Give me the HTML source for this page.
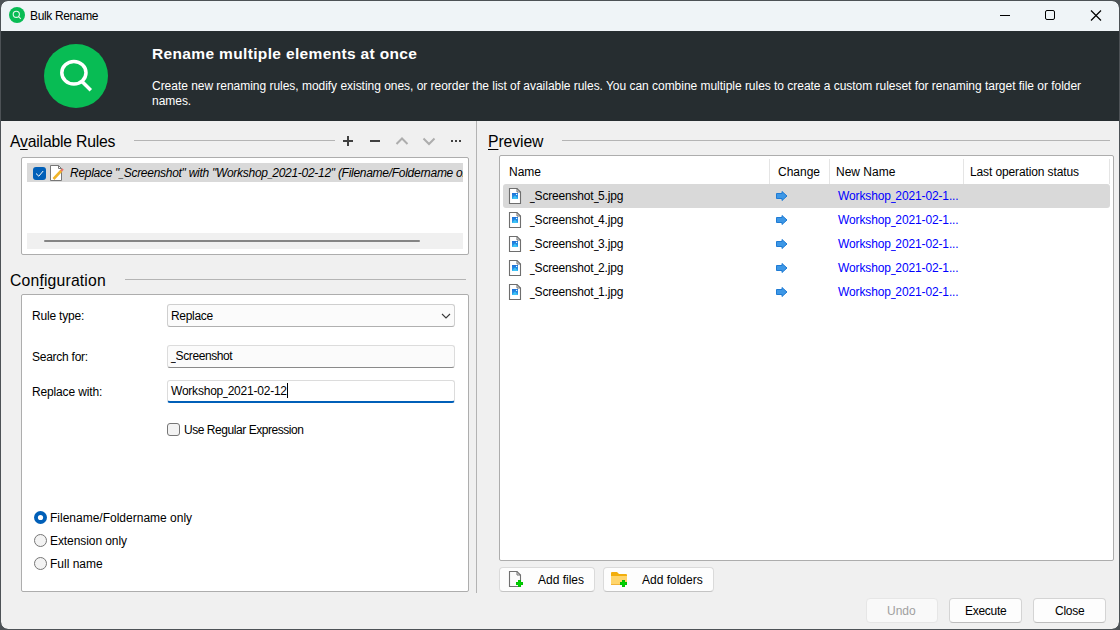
<!DOCTYPE html>
<html><head><meta charset="utf-8">
<style>
html,body{margin:0;padding:0;width:1120px;height:630px;overflow:hidden;background:#4d5256;}
*{box-sizing:border-box;}
body{font-family:"Liberation Sans",sans-serif;color:#000;position:relative;}
.a{position:absolute;}
.t{position:absolute;white-space:nowrap;font-size:12px;line-height:14px;}
.u{display:inline-block;width:4.6px;transform:scaleX(0.7);transform-origin:0 0;}
.s15{font-size:15.75px;line-height:18px;}
svg{position:absolute;overflow:visible;}
#win{position:absolute;left:1px;top:1px;width:1118px;height:628px;background:#f0f0f0;border-radius:7px;overflow:hidden;}
</style></head><body>
<div id="win"></div>
<!-- title bar -->
<div class="a" style="left:1px;top:1px;width:1118px;height:30px;background:#eff4f7;border-radius:7px 7px 0 0"></div>

<svg style="left:0;top:0" width="1120" height="31">
  <circle cx="17" cy="15" r="8" fill="#08bc54"/>
  <circle cx="16.3" cy="14.3" r="3.1" fill="none" stroke="#e6f7ec" stroke-width="1.1"/>
  <line x1="18.6" y1="16.6" x2="20.8" y2="18.8" stroke="#e6f7ec" stroke-width="1.1"/>
  <line x1="1000" y1="15.5" x2="1010" y2="15.5" stroke="#000" stroke-width="1"/>
  <rect x="1045.5" y="10.5" width="9" height="9" rx="1.5" fill="none" stroke="#000" stroke-width="1"/>
  <path d="M1091 10.5 L1101 20.5 M1101 10.5 L1091 20.5" stroke="#000" stroke-width="1.2"/>
</svg>
<div class="t" style="left:30px;top:9px;font-size:12px;letter-spacing:-0.36px;">Bulk Rename</div>

<!-- header -->
<div class="a" style="left:1px;top:31px;width:1118px;height:90px;background:#262d30;"></div>
<svg style="left:0;top:0" width="120" height="121">
  <circle cx="76" cy="76" r="32" fill="#08bc54"/>
  <ellipse cx="73.9" cy="72.7" rx="12.1" ry="11.3" fill="none" stroke="#fff" stroke-width="3.5"/>
  <line x1="82" y1="81.5" x2="90.8" y2="90.3" stroke="#fff" stroke-width="3.5"/>
</svg>
<div class="t" style="left:152px;top:44px;font-size:15.5px;line-height:19px;font-weight:bold;color:#fff;letter-spacing:0.35px;">Rename multiple elements at once</div>
<div class="t" style="left:152px;top:79px;color:#fff;line-height:15px;letter-spacing:-0.03px;">Create new renaming rules, modify existing ones, or reorder the list of available rules. You can combine multiple rules to create a custom ruleset for renaming target file or folder<br>names.</div>

<!-- LEFT PANE -->

<div class="t s15" style="left:10px;top:133px;letter-spacing:-0.2px;">A<span style="text-decoration:underline;text-underline-offset:2px;">v</span>ailable Rules</div>
<div class="a" style="left:134px;top:140px;width:201px;height:1px;background:#b4b4b4;"></div>
<svg style="left:0;top:0" width="480" height="160">
  <path d="M343 141 H353 M348 136 V146" stroke="#404040" stroke-width="2"/>
  <path d="M370 141 H380" stroke="#404040" stroke-width="2"/>
  <path d="M396.5 144 L402 138.5 L407.5 144" fill="none" stroke="#adadad" stroke-width="2"/>
  <path d="M423.5 138.5 L429 144 L434.5 138.5" fill="none" stroke="#adadad" stroke-width="2"/>
  <rect x="451" y="140" width="2" height="2" fill="#404040"/>
  <rect x="455" y="140" width="2" height="2" fill="#404040"/>
  <rect x="459" y="140" width="2" height="2" fill="#404040"/>
</svg>
<div class="a" style="left:21px;top:157px;width:448px;height:98px;background:#fff;border:1px solid #adadad;border-radius:2px;"></div>
<div class="a" style="left:27px;top:163px;width:436px;height:19px;background:#d9d9d9;"></div>
<div class="a" style="left:27px;top:233px;width:436px;height:16px;background:#f0f0f0;"></div>
<div class="a" style="left:44px;top:240px;width:376px;height:2px;background:#858585;border-radius:1px;"></div>
<svg style="left:0;top:0" width="80" height="190">
  <rect x="33" y="167" width="13" height="13" rx="3" fill="#005fb8"/>
  <path d="M36 173.5 L38.8 176.2 L43.2 171" fill="none" stroke="#fff" stroke-width="1"/>
  <path d="M50.5 165.5 H58.5 L61.5 168.5 V180.5 H50.5 Z" fill="#fff" stroke="#777" stroke-width="1"/>
  <path d="M58.5 165.5 V168.5 H61.5" fill="none" stroke="#777" stroke-width="1"/>
  <path d="M53.5 179 L61.5 170.5" stroke="#f0b429" stroke-width="2.6"/>
  <path d="M61 171 L63 169" stroke="#e8736b" stroke-width="2"/>
</svg>
<div class="a" style="left:27px;top:163px;width:436px;height:19px;overflow:hidden;">
<div class="t" style="left:43px;top:3px;font-style:italic;letter-spacing:-0.28px;">Replace "<span class="u">_</span>Screenshot" with "Workshop<span class="u">_</span>2021-02-12" (Filename/Foldername only)</div>
</div>

<div class="t s15" style="left:10px;top:272px;letter-spacing:0.17px;">Con<span style="text-decoration:underline;text-underline-offset:2px;">f</span>iguration</div>
<div class="a" style="left:125px;top:279px;width:341px;height:1px;background:#b4b4b4;"></div>
<div class="a" style="left:21px;top:294px;width:448px;height:298px;background:#fff;border:1px solid #adadad;border-radius:2px;"></div>
<div class="t" style="left:32px;top:309px;letter-spacing:-0.2px;">Rule type:</div>
<div class="a" style="left:167px;top:304px;width:288px;height:23px;background:#fbfbfb;border:1px solid #cfcfcf;border-bottom-color:#b0b0b0;border-radius:3px;"></div>
<div class="t" style="left:171px;top:309px;letter-spacing:-0.3px;">Replace</div>
<svg style="left:0;top:0" width="460" height="330"><path d="M442 314 L446 318 L450 314" fill="none" stroke="#3a3a3a" stroke-width="1.1"/></svg>
<div class="t" style="left:32px;top:350px;letter-spacing:-0.25px;">Search for:</div>
<div class="a" style="left:167px;top:345px;width:288px;height:23px;background:#fbfbfb;border:1px solid #dcdcdc;border-bottom-color:#8a8a8a;border-radius:3px;"></div>
<div class="t" style="left:171px;top:349px;letter-spacing:-0.4px;"><span class="u">_</span>Screenshot</div>
<div class="t" style="left:32px;top:385px;letter-spacing:-0.15px;">Replace with:</div>
<div class="a" style="left:167px;top:380px;width:288px;height:23px;background:#fff;border:1px solid #dcdcdc;border-bottom:2px solid #005fb8;border-radius:3px;"></div>
<div class="t" style="left:171px;top:384px;letter-spacing:-0.22px;">Workshop<span class="u">_</span>2021-02-12</div>
<div class="a" style="left:287px;top:383px;width:1px;height:15px;background:#000;"></div>
<svg style="left:0;top:0" width="480" height="600">
  <rect x="167.5" y="423.5" width="12" height="12" rx="2.5" fill="#f3f3f3" stroke="#767676" stroke-width="1"/>
  <circle cx="40.5" cy="517.5" r="6.5" fill="#005fb8"/>
  <circle cx="40.5" cy="517.5" r="2.6" fill="#fff"/>
  <circle cx="40.5" cy="540.5" r="6" fill="#f3f3f3" stroke="#767676" stroke-width="1"/>
  <circle cx="40.5" cy="563.5" r="6" fill="#f3f3f3" stroke="#767676" stroke-width="1"/>
</svg>
<div class="t" style="left:184px;top:423px;letter-spacing:-0.45px;">Use Regular Expression</div>
<div class="t" style="left:50px;top:511px;">Filename/Foldername only</div>
<div class="t" style="left:50px;top:534px;letter-spacing:-0.08px;">Extension only</div>
<div class="t" style="left:50px;top:557px;">Full name</div>
<div class="a" style="left:476px;top:121px;width:1px;height:472px;background:#b3b3b3;"></div>


<!-- RIGHT PANE -->

<div class="t s15" style="left:488px;top:133px;letter-spacing:-0.09px;"><span style="text-decoration:underline;text-underline-offset:2px;">P</span>review</div>
<div class="a" style="left:562px;top:140px;width:548px;height:1px;background:#b4b4b4;"></div>
<div class="a" style="left:499px;top:155px;width:615px;height:406px;background:#fff;border:1px solid #adadad;border-radius:2px;"></div>
<div class="a" style="left:769px;top:159px;width:1px;height:25px;background:#e5e5e5;"></div>
<div class="a" style="left:829px;top:159px;width:1px;height:25px;background:#e5e5e5;"></div>
<div class="a" style="left:963px;top:159px;width:1px;height:25px;background:#e5e5e5;"></div>
<div class="a" style="left:1109px;top:159px;width:1px;height:25px;background:#e5e5e5;"></div>
<div class="t" style="left:509px;top:165px;">Name</div>
<div class="t" style="left:778px;top:165px;">Change</div>
<div class="t" style="left:836px;top:165px;">New Name</div>
<div class="t" style="left:970px;top:165px;letter-spacing:-0.12px;">Last operation status</div>
<div class="a" style="left:503px;top:184px;width:607px;height:24px;background:#d9d9d9;border-radius:3px;"></div>
<svg style="left:0;top:0" width="1120" height="320">
<defs><linearGradient id="gimg" x1="0" y1="0" x2="0" y2="1"><stop offset="0" stop-color="#1f6fd6"/><stop offset="1" stop-color="#2aa6f0"/></linearGradient></defs>
<g transform="translate(0,0)">
  <path d="M509.5 188.5 H517 L520.5 192 V203.5 H509.5 Z" fill="#fff" stroke="#6e6e6e" stroke-width="1.1"/>
  <path d="M517 188.5 V192 H520.5" fill="none" stroke="#6e6e6e" stroke-width="1"/>
  <rect x="512" y="193" width="6" height="6" fill="url(#gimg)"/>
  <path d="M512 199 L515 195.5 L518 199 Z" fill="#3fc3f5"/>
  <circle cx="516.6" cy="194.4" r="0.7" fill="#dff"/>
  <path d="M776.5 193.5 H782 V191.5 L787 196 L782 200.5 V198.5 H776.5 Z" fill="#3d97e6" stroke="#1f7bd4" stroke-width="1"/>
</g>
<g transform="translate(0,24)">
  <path d="M509.5 188.5 H517 L520.5 192 V203.5 H509.5 Z" fill="#fff" stroke="#6e6e6e" stroke-width="1.1"/>
  <path d="M517 188.5 V192 H520.5" fill="none" stroke="#6e6e6e" stroke-width="1"/>
  <rect x="512" y="193" width="6" height="6" fill="url(#gimg)"/>
  <path d="M512 199 L515 195.5 L518 199 Z" fill="#3fc3f5"/>
  <circle cx="516.6" cy="194.4" r="0.7" fill="#dff"/>
  <path d="M776.5 193.5 H782 V191.5 L787 196 L782 200.5 V198.5 H776.5 Z" fill="#3d97e6" stroke="#1f7bd4" stroke-width="1"/>
</g>
<g transform="translate(0,48)">
  <path d="M509.5 188.5 H517 L520.5 192 V203.5 H509.5 Z" fill="#fff" stroke="#6e6e6e" stroke-width="1.1"/>
  <path d="M517 188.5 V192 H520.5" fill="none" stroke="#6e6e6e" stroke-width="1"/>
  <rect x="512" y="193" width="6" height="6" fill="url(#gimg)"/>
  <path d="M512 199 L515 195.5 L518 199 Z" fill="#3fc3f5"/>
  <circle cx="516.6" cy="194.4" r="0.7" fill="#dff"/>
  <path d="M776.5 193.5 H782 V191.5 L787 196 L782 200.5 V198.5 H776.5 Z" fill="#3d97e6" stroke="#1f7bd4" stroke-width="1"/>
</g>
<g transform="translate(0,72)">
  <path d="M509.5 188.5 H517 L520.5 192 V203.5 H509.5 Z" fill="#fff" stroke="#6e6e6e" stroke-width="1.1"/>
  <path d="M517 188.5 V192 H520.5" fill="none" stroke="#6e6e6e" stroke-width="1"/>
  <rect x="512" y="193" width="6" height="6" fill="url(#gimg)"/>
  <path d="M512 199 L515 195.5 L518 199 Z" fill="#3fc3f5"/>
  <circle cx="516.6" cy="194.4" r="0.7" fill="#dff"/>
  <path d="M776.5 193.5 H782 V191.5 L787 196 L782 200.5 V198.5 H776.5 Z" fill="#3d97e6" stroke="#1f7bd4" stroke-width="1"/>
</g>
<g transform="translate(0,96)">
  <path d="M509.5 188.5 H517 L520.5 192 V203.5 H509.5 Z" fill="#fff" stroke="#6e6e6e" stroke-width="1.1"/>
  <path d="M517 188.5 V192 H520.5" fill="none" stroke="#6e6e6e" stroke-width="1"/>
  <rect x="512" y="193" width="6" height="6" fill="url(#gimg)"/>
  <path d="M512 199 L515 195.5 L518 199 Z" fill="#3fc3f5"/>
  <circle cx="516.6" cy="194.4" r="0.7" fill="#dff"/>
  <path d="M776.5 193.5 H782 V191.5 L787 196 L782 200.5 V198.5 H776.5 Z" fill="#3d97e6" stroke="#1f7bd4" stroke-width="1"/>
</g>

</svg>
<div class="t" style="letter-spacing:-0.18px;left:530px;top:189px;"><span class="u">_</span>Screenshot<span class="u">_</span>5.jpg</div>
<div class="t" style="letter-spacing:-0.13px;left:838px;top:189px;color:#0000ff;">Workshop<span class="u">_</span>2021-02-1...</div>
<div class="t" style="letter-spacing:-0.18px;left:530px;top:213px;"><span class="u">_</span>Screenshot<span class="u">_</span>4.jpg</div>
<div class="t" style="letter-spacing:-0.13px;left:838px;top:213px;color:#0000ff;">Workshop<span class="u">_</span>2021-02-1...</div>
<div class="t" style="letter-spacing:-0.18px;left:530px;top:237px;"><span class="u">_</span>Screenshot<span class="u">_</span>3.jpg</div>
<div class="t" style="letter-spacing:-0.13px;left:838px;top:237px;color:#0000ff;">Workshop<span class="u">_</span>2021-02-1...</div>
<div class="t" style="letter-spacing:-0.18px;left:530px;top:261px;"><span class="u">_</span>Screenshot<span class="u">_</span>2.jpg</div>
<div class="t" style="letter-spacing:-0.13px;left:838px;top:261px;color:#0000ff;">Workshop<span class="u">_</span>2021-02-1...</div>
<div class="t" style="letter-spacing:-0.18px;left:530px;top:285px;"><span class="u">_</span>Screenshot<span class="u">_</span>1.jpg</div>
<div class="t" style="letter-spacing:-0.13px;left:838px;top:285px;color:#0000ff;">Workshop<span class="u">_</span>2021-02-1...</div>



<!-- bottom buttons -->

<div class="a" style="left:499px;top:567px;width:96px;height:25px;background:#fdfdfd;border:1px solid #dadada;border-bottom-color:#c4c4c4;border-radius:4px;"></div>
<div class="a" style="left:603px;top:567px;width:111px;height:25px;background:#fdfdfd;border:1px solid #dadada;border-bottom-color:#c4c4c4;border-radius:4px;"></div>
<svg style="left:0;top:0" width="640" height="600">
  <path d="M509.5 571.5 H517 L520.5 575 V586.5 H509.5 Z" fill="#fbfbfb" stroke="#707070" stroke-width="1.1"/>
  <path d="M517 571.5 V575 H520.5" fill="none" stroke="#707070" stroke-width="1"/>
  <path d="M516 582 H518 V580 H521 V582 H523 V585 H521 V587 H518 V585 H516 Z" fill="#00b800"/><path d="M518.5 580.5 H520.5 V582.5 H522.5 V584.5 H520.5 V586.5 H518.5 V584.5 H516.5 V582.5 H518.5 Z" fill="#00d000" stroke="none"/>
  <path d="M611 573 Q611 572 612 572 H617 L619 574 H626 Q627 574 627 575 V577 H611 Z" fill="#f2ae0c"/>
  <path d="M611 576 H627 V584 Q627 585 626 585 H612 Q611 585 611 584 Z" fill="#ffd56b"/>
  <path d="M611 584 H620 V585 H611 Z" fill="#f2b43a"/>
  <path d="M620 582 H622 V580 H625 V582 H627 V585 H625 V587 H622 V585 H620 Z" fill="#00b800"/><path d="M622.5 580.5 H624.5 V582.5 H626.5 V584.5 H624.5 V586.5 H622.5 V584.5 H620.5 V582.5 H622.5 Z" fill="#00d000" stroke="none"/>
</svg>
<div class="t" style="left:538px;top:573px;">Add files</div>
<div class="t" style="left:642px;top:573px;">Add folders</div>

<div class="a" style="left:866px;top:598px;width:72px;height:25px;background:#f9f9f9;border:1px solid #e6e6e6;border-radius:4px;"></div>
<div class="a" style="left:949px;top:598px;width:73px;height:25px;background:#fdfdfd;border:1px solid #d4d4d4;border-bottom-color:#bdbdbd;border-radius:4px;"></div>
<div class="a" style="left:1033px;top:598px;width:73px;height:25px;background:#fdfdfd;border:1px solid #d4d4d4;border-bottom-color:#bdbdbd;border-radius:4px;"></div>
<div class="t" style="left:887px;top:604px;color:#a0a0a0;">Undo</div>
<div class="t" style="left:965px;top:604px;letter-spacing:-0.28px;">Execute</div>
<div class="t" style="left:1055px;top:604px;letter-spacing:-0.25px;">Close</div>


<!-- window border -->
<div class="a" style="left:0;top:0;width:1120px;height:630px;border:1px solid #4d5256;border-radius:8px;pointer-events:none;"></div>
</body></html>
